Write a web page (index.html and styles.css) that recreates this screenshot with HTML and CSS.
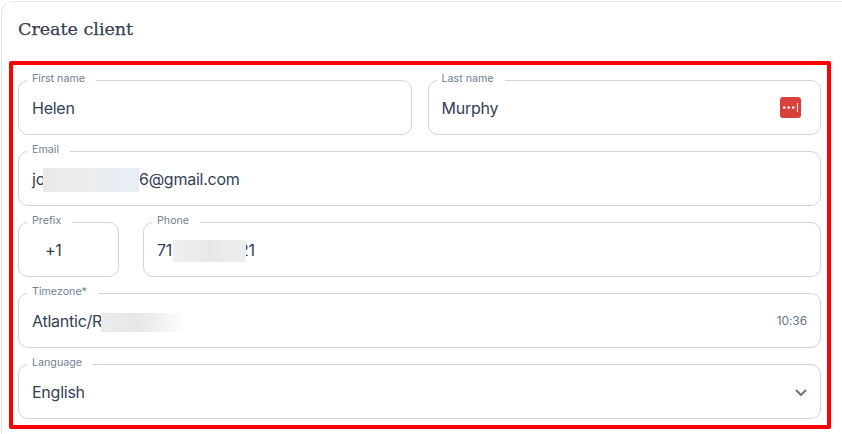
FILE: index.html
```html
<!DOCTYPE html>
<html lang="en">
<head>
<meta charset="utf-8">
<title>Create client</title>
<link rel="stylesheet" href="styles.css">
</head>
<body>
<main class="card">
  <h1 class="title">Create client</h1>
  <form class="highlight">
    <div class="row">
      <div class="field grow">
        <label class="label">First name</label>
        <span class="value">Helen</span>
      </div>
      <div class="field grow">
        <label class="label">Last name</label>
        <span class="value">Murphy</span>
        <svg class="lastpass" viewBox="0 0 21 21" aria-hidden="true">
          <rect width="21" height="21" rx="3" fill="#d93f3b"/>
          <circle cx="4.2" cy="10.5" r="1.3" fill="#fff"/>
          <circle cx="8.7" cy="10.5" r="1.3" fill="#fff"/>
          <circle cx="13.2" cy="10.5" r="1.3" fill="#fff"/>
          <rect x="16.9" y="6" width="1" height="9" fill="#fff"/>
        </svg>
      </div>
    </div>
    <div class="row">
      <div class="field grow">
        <label class="label">Email</label>
        <span class="value">jo<span class="redact redact-email"></span>6@gmail.com</span>
      </div>
    </div>
    <div class="row row-wide">
      <div class="field prefix">
        <label class="label">Prefix</label>
        <span class="value value-prefix">+1</span>
      </div>
      <div class="field grow">
        <label class="label">Phone</label>
        <span class="value">71<span class="redact redact-phone"></span>21</span>
      </div>
    </div>
    <div class="row">
      <div class="field grow">
        <label class="label">Timezone*</label>
        <span class="value">Atlantic/R<span class="redact redact-zone"></span></span>
        <span class="time">10:36</span>
      </div>
    </div>
    <div class="row">
      <div class="field grow">
        <label class="label">Language</label>
        <span class="value">English</span>
        <svg class="chevron" viewBox="0 0 12 7" aria-hidden="true">
          <path d="M1 1l5 5 5-5" fill="none" stroke="#6b7280" stroke-width="2"/>
        </svg>
      </div>
    </div>
  </form>
</main>
</body>
</html>
```

FILE: styles.css
```css
* {
  box-sizing: border-box;
}

html,
body {
  margin: 0;
  height: 434px;
  overflow: hidden;
  background: #fff;
}

body {
  padding: 1px 0 0 1px;
  font-family: Inter, "Liberation Sans", sans-serif;
}

.card {
  height: 433px;
  border-top: 1px solid #e5e7eb;
  border-left: 1px solid #e5e7eb;
  border-top-left-radius: 12px;
}

.title {
  margin: 0;
  height: 59px;
  padding: 15px 0 0 16px;
  font-family: "DejaVu Serif", "Liberation Serif", serif;
  font-size: 17.5px;
  line-height: 24px;
  font-weight: 400;
  color: #374151;
  -webkit-text-stroke: 0.25px #374151;
}

.highlight {
  display: flex;
  flex-direction: column;
  gap: 16px;
  width: 822px;
  height: 368px;
  margin-left: 7px;
  padding: 15px 6px 6px 5px;
  border: 4px solid #ff0000;
  border-radius: 2px;
}

.row {
  display: flex;
  gap: 16px;
}

.row-wide {
  gap: 24px;
}

.field {
  position: relative;
  display: flex;
  align-items: center;
  justify-content: space-between;
  height: 55px;
  padding: 0 13px;
  border: 1px solid #cdd5df;
  border-radius: 10px;
}

.grow {
  flex: 1 1 0;
  min-width: 0;
}

.prefix {
  flex: 0 0 101px;
}

.label {
  position: absolute;
  top: -9px;
  left: 8px;
  padding: 0 11px 0 5px;
  background: #fff;
  font-size: 10.7px;
  line-height: 14px;
  color: #6f8192;
}

.value {
  font-size: 16px;
  line-height: 24px;
  letter-spacing: -0.25px;
  color: #334155;
}

.value-prefix {
  margin-left: 13px;
}

.redact {
  display: inline-block;
  position: relative;
  margin-block: -4px;
  vertical-align: middle;
}

.redact-email {
  width: 96px;
  height: 24px;
  margin-left: -2px;
  margin-right: 0;
  background: linear-gradient(90deg, #e9e9e9, #ececec 40%, #e9edf1 70%, #e6eef5);
}

.redact-phone {
  width: 73px;
  height: 22px;
  margin-left: 1px;
  margin-right: -7px;
  background: linear-gradient(90deg, #efefef, #e8e8e8 50%, #eeeeee);
}

.redact-zone {
  width: 85px;
  height: 19px;
  margin-left: -1px;
  background: linear-gradient(90deg, #ebebeb, #e7e7e7 45%, #ffffff);
}

.time {
  font-size: 12px;
  line-height: 16px;
  letter-spacing: -0.1px;
  color: #64748b;
}

.lastpass {
  width: 21px;
  height: 21px;
  margin-right: 6px;
}

.chevron {
  width: 12px;
  height: 7px;
  margin-top: 2px;
}
```
